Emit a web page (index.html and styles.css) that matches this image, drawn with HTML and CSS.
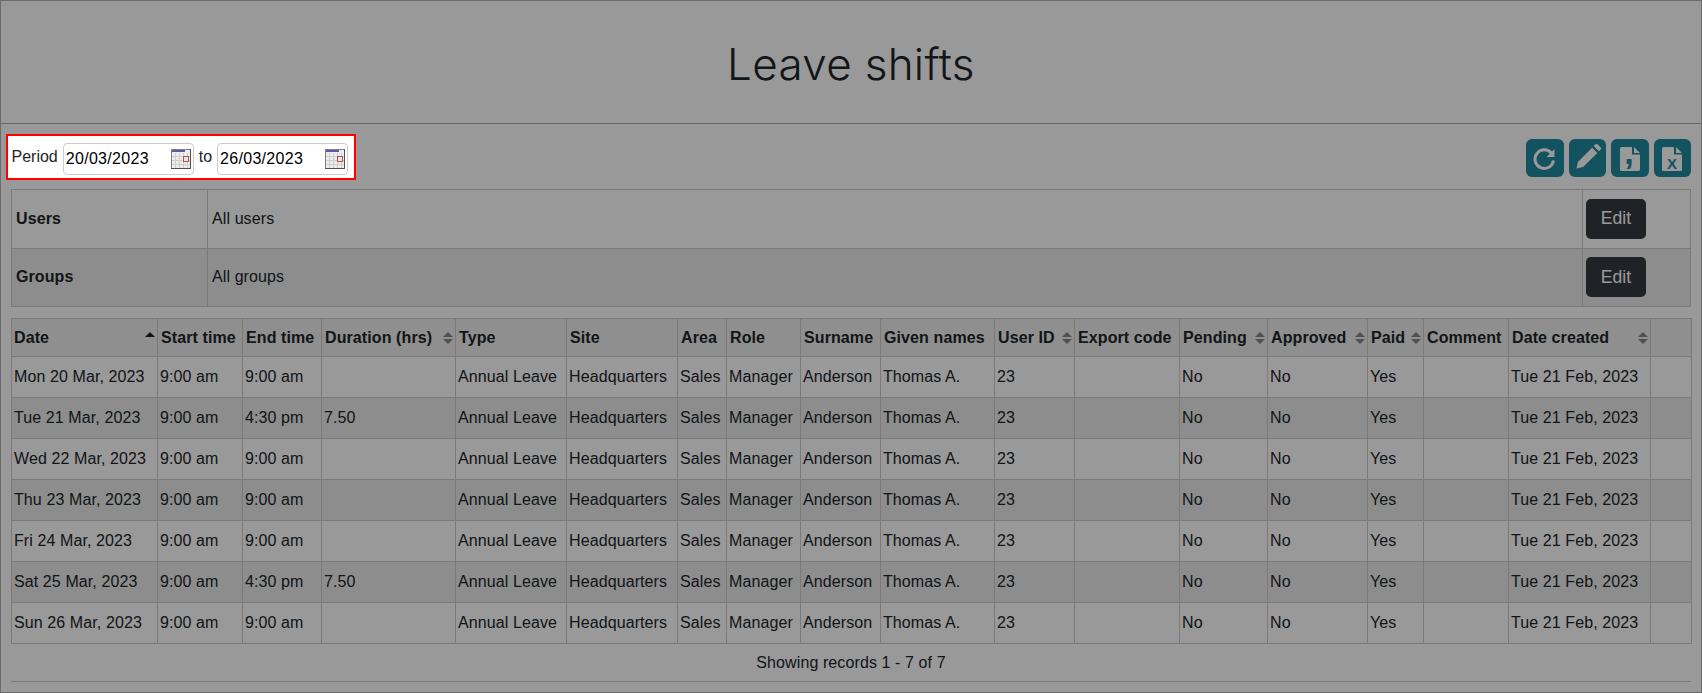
FILE: index.html
```html
<!DOCTYPE html>
<html lang="en">
<head>
<meta charset="utf-8">
<title>Leave shifts</title>
<link rel="stylesheet" href="styles.css">
</head>
<body>
<div class="page">
  <header class="title-bar"><h1>Leave shifts</h1></header>
  <div class="toolbar">
    <div class="period">
      <span class="period-label">Period</span>
      <div class="date-box"><span>20/03/2023</span>
        <svg class="cal" viewBox="0 0 20 20"><rect x="0.5" y="0.5" width="19" height="19" fill="#ececec" stroke="#808080"/><rect x="1" y="1" width="13" height="2" fill="#5a5aa8"/><path d="M1 7.500h18M1 11.500h18M1 15.500h18M4.500 4v15M8.500 4v15M12.500 4v15M16.500 4v15" stroke="#cfcfcf" fill="none"/><rect x="12.500" y="7.500" width="5" height="5" fill="#efe4e4" stroke="#b85050"/><path d="M0 19.500h20M19.500 0v20" stroke="#505050"/></svg>
      </div>
      <span class="period-label">to</span>
      <div class="date-box"><span>26/03/2023</span>
        <svg class="cal" viewBox="0 0 20 20"><rect x="0.5" y="0.5" width="19" height="19" fill="#ececec" stroke="#808080"/><rect x="1" y="1" width="13" height="2" fill="#5a5aa8"/><path d="M1 7.500h18M1 11.500h18M1 15.500h18M4.500 4v15M8.500 4v15M12.500 4v15M16.500 4v15" stroke="#cfcfcf" fill="none"/><rect x="12.500" y="7.500" width="5" height="5" fill="#efe4e4" stroke="#b85050"/><path d="M0 19.500h20M19.500 0v20" stroke="#505050"/></svg>
      </div>
    </div>
    <div class="actions">
      <button class="icon-btn wide"><svg viewBox="0 0 38 38"><path d="M25.500 14.200A9.300 9.300 0 1 0 27.500 21.500" fill="none" stroke="#fff" stroke-width="3"/><path d="M28.500 10V18H20.500Z" fill="#fff"/></svg></button>
      <button class="icon-btn"><svg viewBox="0 0 37 38"><path d="M7.500 29.500l1.400-6.600L23.100 8.700l5.200 5.200L14.100 28.100Z" fill="#fff"/><path d="M24.700 7.100l1.800-1.800q1-1 2 0l3.200 3.200q1 1 0 2l-1.800 1.800Z" fill="#fff"/></svg></button>
      <button class="icon-btn wide"><svg viewBox="0 0 38 38"><path d="M9 9.500q0-1.500 1.500-1.500H21V15.500h8V30.500q0 1.500-1.500 1.500h-17q-1.500 0-1.500-1.500Z" fill="#fff"/><path d="M23 8l6 6h-6Z" fill="#fff"/><text x="18" y="25" class="file-mark">,</text></svg></button>
      <button class="icon-btn"><svg viewBox="0 0 37 38"><path d="M8 9.500q0-1.500 1.500-1.500H20V15.500h8V30.500q0 1.500-1.500 1.500h-17q-1.500 0-1.500-1.500Z" fill="#fff"/><path d="M22 8l6 6h-6Z" fill="#fff"/><text x="18" y="29.500" class="file-letter">X</text></svg></button>
    </div>
  </div>

  <table class="filters">
    <colgroup><col class="f1"><col class="f2"><col class="f3"></colgroup>
    <tr><th>Users</th><td>All users</td><td><button class="edit">Edit</button></td></tr>
    <tr class="alt"><th>Groups</th><td>All groups</td><td><button class="edit">Edit</button></td></tr>
  </table>

  <table class="grid">
    <colgroup>
      <col class="c1"><col class="c2"><col class="c3"><col class="c4"><col class="c5"><col class="c6"><col class="c7"><col class="c8"><col class="c9"><col class="c10"><col class="c11"><col class="c12"><col class="c13"><col class="c14"><col class="c15"><col class="c16"><col class="c17"><col class="c18">
    </colgroup>
    <thead>
      <tr>
        <th><div class="th"><span>Date</span><i class="sort asc"></i></div></th>
        <th>Start time</th>
        <th>End time</th>
        <th><div class="th"><span>Duration (hrs)</span><i class="sort"></i></div></th>
        <th>Type</th>
        <th>Site</th>
        <th>Area</th>
        <th>Role</th>
        <th>Surname</th>
        <th>Given names</th>
        <th><div class="th"><span>User ID</span><i class="sort"></i></div></th>
        <th>Export code</th>
        <th><div class="th"><span>Pending</span><i class="sort"></i></div></th>
        <th><div class="th"><span>Approved</span><i class="sort"></i></div></th>
        <th><div class="th"><span>Paid</span><i class="sort"></i></div></th>
        <th>Comment</th>
        <th><div class="th"><span>Date created</span><i class="sort"></i></div></th>
        <th></th>
      </tr>
    </thead>
    <tbody>
      <tr><td>Mon 20 Mar, 2023</td><td>9:00 am</td><td>9:00 am</td><td></td><td>Annual Leave</td><td>Headquarters</td><td>Sales</td><td>Manager</td><td>Anderson</td><td>Thomas A.</td><td>23</td><td></td><td>No</td><td>No</td><td>Yes</td><td></td><td>Tue 21 Feb, 2023</td><td></td></tr>
      <tr class="alt"><td>Tue 21 Mar, 2023</td><td>9:00 am</td><td>4:30 pm</td><td>7.50</td><td>Annual Leave</td><td>Headquarters</td><td>Sales</td><td>Manager</td><td>Anderson</td><td>Thomas A.</td><td>23</td><td></td><td>No</td><td>No</td><td>Yes</td><td></td><td>Tue 21 Feb, 2023</td><td></td></tr>
      <tr><td>Wed 22 Mar, 2023</td><td>9:00 am</td><td>9:00 am</td><td></td><td>Annual Leave</td><td>Headquarters</td><td>Sales</td><td>Manager</td><td>Anderson</td><td>Thomas A.</td><td>23</td><td></td><td>No</td><td>No</td><td>Yes</td><td></td><td>Tue 21 Feb, 2023</td><td></td></tr>
      <tr class="alt"><td>Thu 23 Mar, 2023</td><td>9:00 am</td><td>9:00 am</td><td></td><td>Annual Leave</td><td>Headquarters</td><td>Sales</td><td>Manager</td><td>Anderson</td><td>Thomas A.</td><td>23</td><td></td><td>No</td><td>No</td><td>Yes</td><td></td><td>Tue 21 Feb, 2023</td><td></td></tr>
      <tr><td>Fri 24 Mar, 2023</td><td>9:00 am</td><td>9:00 am</td><td></td><td>Annual Leave</td><td>Headquarters</td><td>Sales</td><td>Manager</td><td>Anderson</td><td>Thomas A.</td><td>23</td><td></td><td>No</td><td>No</td><td>Yes</td><td></td><td>Tue 21 Feb, 2023</td><td></td></tr>
      <tr class="alt"><td>Sat 25 Mar, 2023</td><td>9:00 am</td><td>4:30 pm</td><td>7.50</td><td>Annual Leave</td><td>Headquarters</td><td>Sales</td><td>Manager</td><td>Anderson</td><td>Thomas A.</td><td>23</td><td></td><td>No</td><td>No</td><td>Yes</td><td></td><td>Tue 21 Feb, 2023</td><td></td></tr>
      <tr><td>Sun 26 Mar, 2023</td><td>9:00 am</td><td>9:00 am</td><td></td><td>Annual Leave</td><td>Headquarters</td><td>Sales</td><td>Manager</td><td>Anderson</td><td>Thomas A.</td><td>23</td><td></td><td>No</td><td>No</td><td>Yes</td><td></td><td>Tue 21 Feb, 2023</td><td></td></tr>
    </tbody>
  </table>
  <div class="records">Showing records 1 - 7 of 7</div>
</div>
<div class="backdrop"></div>
</body>
</html>
```

FILE: styles.css
```css
* { box-sizing: border-box; }
html, body { margin: 0; height: 100%; overflow: hidden; }
body {
  background: #fff;
  color: #212529;
  font-family: "Liberation Sans", Arial, sans-serif;
  font-size: 16px;
  letter-spacing: 0.1px;
}
.page {
  height: 693px;
  border: 1px solid #b4b4b4;
  display: flex;
  flex-direction: column;
}
.backdrop {
  position: fixed;
  inset: 0;
  background: rgba(0, 0, 0, 0.4);
  z-index: 10;
}
.title-bar {
  height: 123px;
  flex: none;
  border-bottom: 1px solid #aaa;
  display: flex;
  align-items: center;
  justify-content: center;
}
h1 {
  margin: 0 0 -4px 0;
  font-family: Inter, "Noto Sans", sans-serif;
  font-weight: 300;
  font-size: 44px;
  line-height: 1.2;
  color: #212529;
  letter-spacing: 0.3px;
}
.toolbar {
  flex: none;
  height: 65px;
  padding: 10px 10px 0 5px;
  display: flex;
  justify-content: space-between;
  align-items: flex-start;
}
.period {
  position: relative;
  z-index: 20;
  width: 350px;
  height: 46px;
  background: #fff;
  border: 2px solid #f00;
  padding: 4px 6px 0 3.5px;
  display: flex;
  align-items: center;
  gap: 5px;
  letter-spacing: 0;
}
.period-label { margin-top: -4px; }
.date-box {
  width: 132px;
  height: 32px;
  border: 1px solid #ccc;
  border-radius: 4px;
  padding: 0 2px;
  display: flex;
  align-items: center;
  justify-content: space-between;
  color: #000;
  letter-spacing: 0.3px;
}
.cal { width: 20px; height: 20px; flex: none; }
.actions {
  display: flex;
  gap: 5px;
  padding-top: 5px;
}
.icon-btn {
  width: 37px;
  height: 38px;
  padding: 0;
  border: 0;
  border-radius: 6px;
  background: #20899e;
}
.icon-btn.wide { width: 38px; }
.icon-btn svg { display: block; width: 100%; height: 100%; overflow: visible; }
.file-mark {
  font: bold 34px "Liberation Sans", sans-serif;
  fill: #20899e;
  text-anchor: middle;
}
.file-letter {
  font: bold 15px "Liberation Sans", sans-serif;
  fill: #20899e;
  text-anchor: middle;
}
table {
  border-collapse: collapse;
  table-layout: fixed;
  margin-left: 10px;
  flex: none;
}
.filters { width: 1680px; margin-bottom: 11px; }
.f1 { width: 196px; }
.f3 { width: 108px; }
.filters th, .filters td {
  border: 1px solid #ccc;
  padding: 0 3px;
  height: 58.5px;
  text-align: left;
}
.filters th { padding-left: 4px; }
.filters td { padding-left: 4px; }
.filters td:last-child { padding-left: 3px; }
.alt { background: #e9ecea; }
.edit {
  display: block;
  width: 60px;
  height: 40px;
  border: 0;
  border-radius: 5px;
  background: #343a40;
  color: #fff;
  font: 17.6px "Liberation Sans", Arial, sans-serif;
}
.grid { width: 1680px; }
.c1 { width: 146px; } .c2 { width: 85px; } .c3 { width: 79px; }
.c4 { width: 134px; } .c5 { width: 111px; } .c6 { width: 111px; }
.c7 { width: 49px; } .c8 { width: 74px; } .c9 { width: 80px; }
.c10 { width: 114px; } .c11 { width: 80px; } .c12 { width: 105px; }
.c13 { width: 88px; } .c14 { width: 100px; } .c15 { width: 56px; }
.c16 { width: 85px; } .c17 { width: 142px; } .c18 { width: 41px; }
.grid th, .grid td {
  border: 1px solid #ccc;
  padding: 0 3px;
  text-align: left;
  white-space: nowrap;
  overflow: hidden;
}
.grid th { height: 38px; background: #eee; padding: 0 2px 0 3px; }
.grid th:first-child { padding-left: 2px; }
.grid td { height: 41px; padding-left: 2px; }
.grid tbody tr:nth-child(odd) td { background: #fff; }
.grid tr.alt td { background: #e9ecea; }
.th {
  display: flex;
  align-items: center;
  justify-content: space-between;
}
.sort {
  position: relative;
  flex: none;
  width: 10px;
  height: 12px;
}
.sort::before, .sort::after {
  content: "";
  position: absolute;
  left: 0;
  border-left: 5px solid transparent;
  border-right: 5px solid transparent;
}
.sort::before { top: 0; border-bottom: 5px solid #888; }
.sort::after { bottom: 0; border-top: 5px solid #888; }
.sort.asc::before { border-bottom-color: #222; }
.sort.asc::after { display: none; }
.records {
  margin: 0 0 0 10px;
  width: 1680px;
  height: 38px;
  flex: none;
  border-bottom: 1px solid #ccc;
  display: flex;
  align-items: center;
  justify-content: center;
}
```
